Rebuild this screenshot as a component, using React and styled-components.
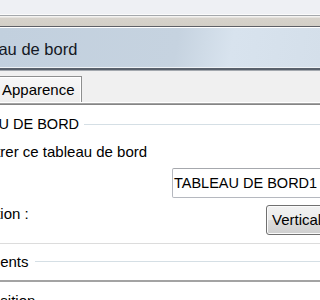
import React from "react";
import styled, { createGlobalStyle } from "styled-components";

const GlobalStyle = createGlobalStyle`
    html, body {
        margin: 0;
        padding: 0;
        width: 320px;
        height: 300px;
        overflow: hidden;
        background: #ffffff;
        font-family: "Liberation Sans", Arial, sans-serif;
        color: #000000;
    }
`;

const Window = styled.div`
    width: 320px;
    display: flex;
    flex-direction: column;

    & > * {
        flex-shrink: 0;
    }
`;

const TopStrip = styled.div`
    height: 14px;
    background: #eef0f4;
    border-bottom: 1px solid #fbfbfb;
`;

const Band = styled.div`
    height: 10px;
    border-top: 1px solid #a4a8ac;
    background: linear-gradient(#f4f3f1 0, #f4f3f1 1px, #d6d2cb 2px, #d3cfc7 100%);
    border-bottom: 1px solid #5e6066;
`;

const Header = styled.div`
    height: 39px;
    border-top: 1px solid #ffffff;
    background: linear-gradient(100deg, #c2d0de 0%, #c6d3e0 55%, #d8e3ee 72%, #d4dfea 100%);
    border-bottom: 1px solid #eef2f6;
    box-shadow: 0 2px 0 #59616c, 0 3px 0 #a3a8ae;
    display: flex;
    align-items: center;
    margin-bottom: 3px;
`;

const Cut = styled.span`
    display: inline-block;
    white-space: nowrap;
    margin-left: ${(p) => -(p.$cut || 0)}px;
`;

const Title = styled.div`
    font-size: 16.5px;
    color: #141824;
    padding-top: 3px;
    white-space: nowrap;
`;

const TabStrip = styled.div`
    height: 31px;
    background: #f0f0f0;
    display: flex;
    align-items: flex-end;
    border-bottom: 1px solid #ffffff;
`;

const Tab = styled.div`
    height: 25px;
    margin-left: -6px;
    padding: 0 6px 0 7px;
    border: 1px solid #8e8f8f;
    border-bottom: none;
    box-shadow: inset 1px 1px 0 #ffffff, inset -1px 0 0 #ffffff;
    background: linear-gradient(#f7f7f7, #eeeeee);
    font-size: 15px;
    line-height: 25px;
    color: #000;
`;

const Panel = styled.div`
    background: #ffffff;
    border-top: 1px solid #a3a3a3;
    box-shadow: inset 0 1px 0 #858585;
    padding-top: 1px;
    display: flex;
    flex-direction: column;

    & > * {
        flex-shrink: 0;
    }
`;

const Legend = styled.div`
    height: 14px;
    margin-top: ${(p) => p.$top}px;
    display: flex;
    align-items: center;
    gap: ${(p) => p.$gap}px;
    font-size: ${(p) => p.$size}px;
    white-space: nowrap;
    overflow: hidden;

    &::after {
        content: "";
        flex: 1;
        height: 1px;
        background: #d5dfe5;
    }
`;

const Row = styled.div`
    display: flex;
    align-items: flex-start;
    margin-top: ${(p) => p.$top}px;
    height: ${(p) => p.$h}px;
    font-size: 15px;
    line-height: 18px;
    white-space: nowrap;
`;

const Input = styled.div`
    margin-left: 172px;
    width: 190px;
    height: 28px;
    flex-shrink: 0;
    border: 1px solid #b5b8bf;
    border-top-color: #a6a8ad;
    border-radius: 2px;
    padding-left: 1px;
    font-size: 14.5px;
    line-height: 28px;
    color: #000;
`;

const Button = styled.div`
    width: 100px;
    height: 28px;
    flex-shrink: 0;
    margin-left: auto;
    margin-right: -53px;
    border: 1px solid #707070;
    border-radius: 3px;
    background: linear-gradient(#f2f2f2 0%, #ebebeb 50%, #dddddd 51%, #cfcfcf 100%);
    box-shadow: inset 0 0 0 1px #fbfbfb;
    padding-left: 5px;
    font-size: 15px;
    line-height: 28px;
`;

const Separator = styled.div`
    margin-top: ${(p) => p.$top}px;
    height: ${(p) => p.$h}px;
    background: ${(p) => p.$color};
`;

export default function App() {
    return (
        <>
            <GlobalStyle />
            <Window>
                <TopStrip />
                <Band />
                <Header>
                    <Title>
                        <Cut $cut={41}>Tableau de bord</Cut>
                    </Title>
                </Header>
                <TabStrip>
                    <Tab>Apparence</Tab>
                </TabStrip>
                <Panel>
                    <Legend $top={12} $gap={5} $size={14.5}>
                        <Cut $cut={56}>TABLEAU DE BORD</Cut>
                    </Legend>
                    <Row $top={12} $h={18}>
                        <Cut $cut={33}>Montrer ce tableau de bord</Cut>
                    </Row>
                    <Row $top={7} $h={30}>
                        <Input>TABLEAU DE BORD1</Input>
                    </Row>
                    <Row $top={7} $h={30}>
                        <Cut $cut={53}>Orientation :</Cut>
                        <Button>Verticale</Button>
                    </Row>
                    <Separator $top={8} $h={1} $color="#dcdcdc" />
                    <Legend $top={10} $gap={6} $size={15}>
                        <Cut $cut={34}>Éléments</Cut>
                    </Legend>
                    <Separator $top={12} $h={2} $color="#a3a3a3" />
                    <Row $top={10} $h={18}>
                        <Cut $cut={18}>Position</Cut>
                    </Row>
                </Panel>
            </Window>
        </>
    );
}
